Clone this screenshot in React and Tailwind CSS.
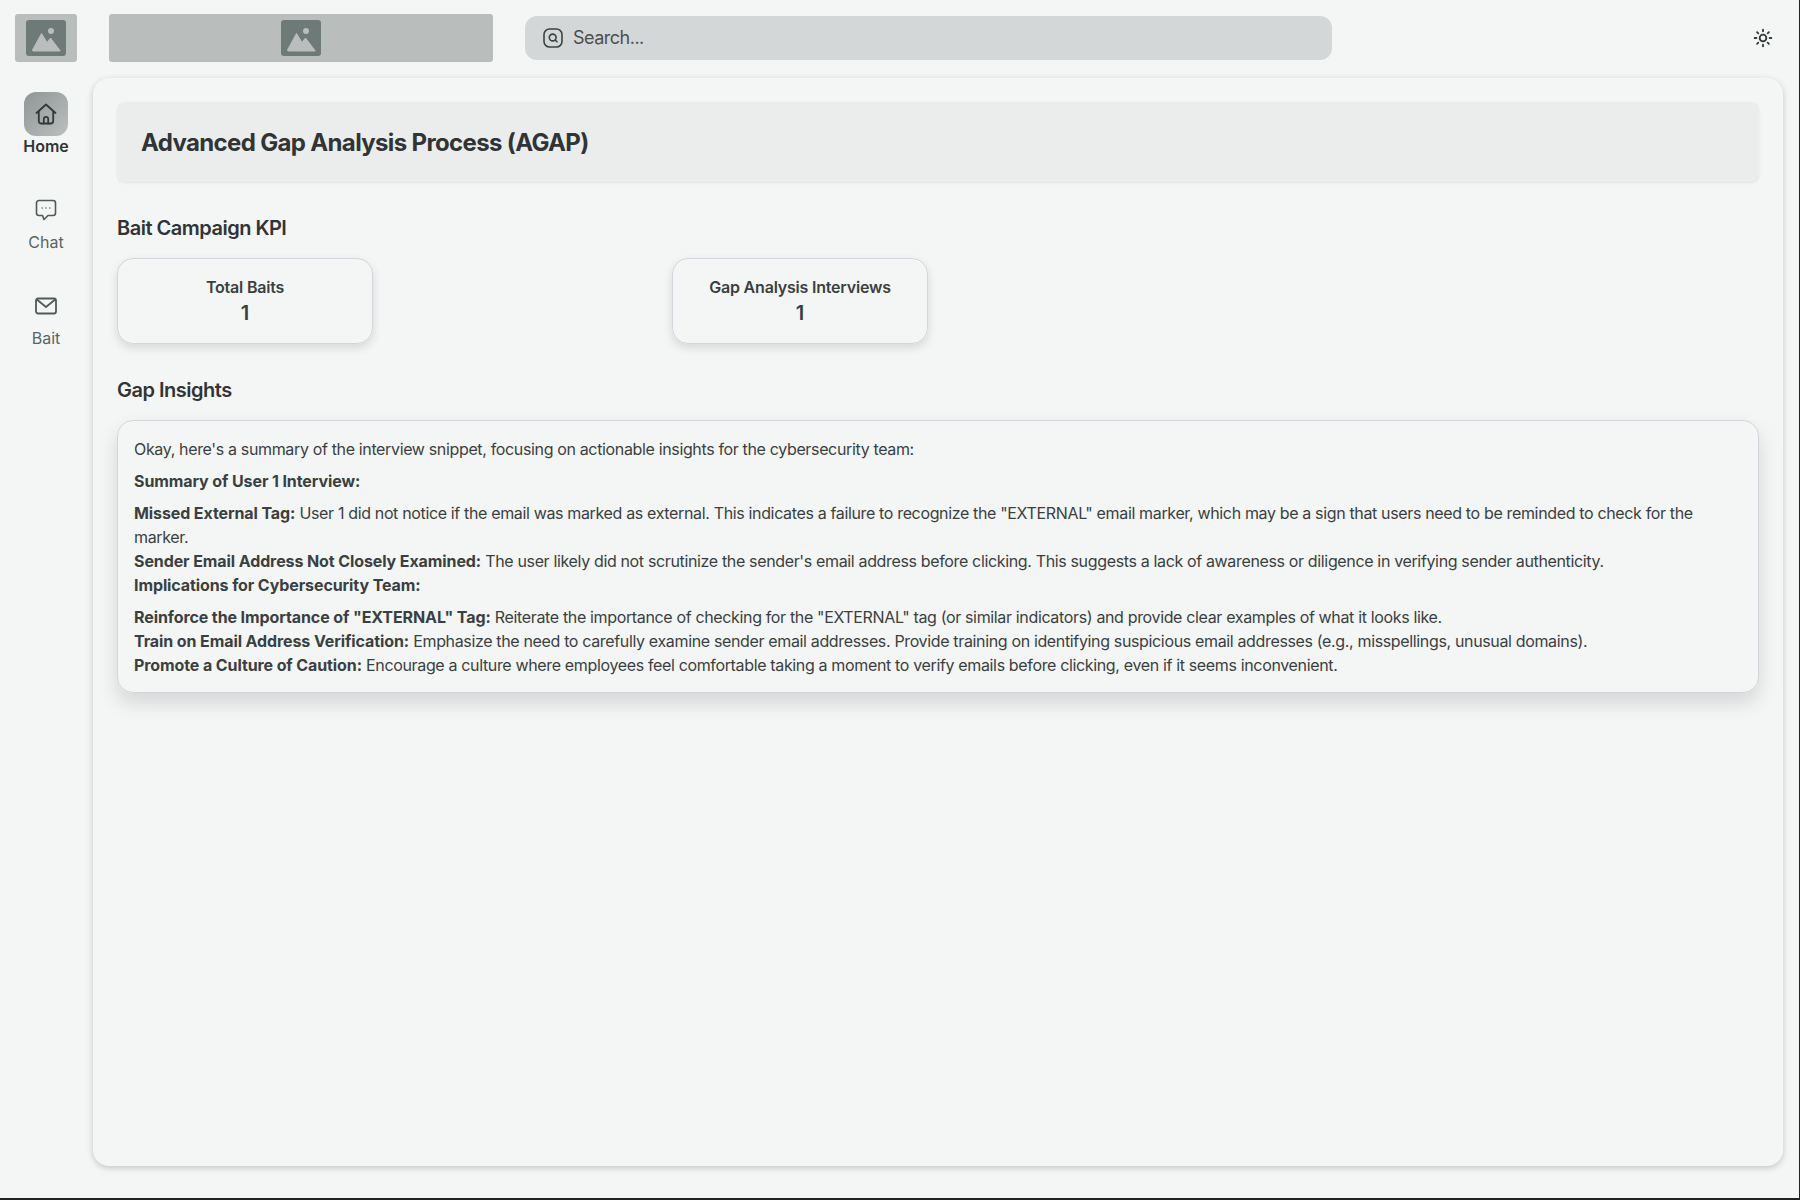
import React from "react";
import { Sun } from "lucide-react";

const ImageIcon = () => (
	<svg width="40" height="36" viewBox="0 0 40 36">
		<rect width="40" height="36" rx="3" fill="#6e7a78" />
		<circle cx="25" cy="11" r="3" fill="#b9bdbc" />
		<path
			d="M6.5 30 15.5 13.5 21 22.5 24.5 18 34 30.500a.5.5 0 0 1 0 .5H7z"
			fill="#b9bdbc"
			stroke="#b9bdbc"
			strokeLinejoin="round"
		/>
	</svg>
);

const HomeIcon = () => (
	<svg width="22" height="22" viewBox="0 0 22 22" fill="none" stroke="#33393a" strokeWidth="1.8" strokeLinejoin="round" strokeLinecap="round">
		<path d="M1.500 10 11 1.500 20.500 10" />
		<path d="M3.800 8.500V18a2.500 2.500 0 0 0 2.500 2.500h9.400a2.500 2.500 0 0 0 2.500-2.500V8.500" />
		<path d="M8.800 20.500v-4.500a2.200 2.200 0 0 1 4.400 0v4.500" />
	</svg>
);

const ChatIcon = () => (
	<svg width="22" height="22" viewBox="0 0 22 22" fill="none" stroke="#4f5a59" strokeWidth="1.600" strokeLinejoin="round">
		<path d="M4 1.500h14A2.500 2.500 0 0 1 20.500 4v10a2.500 2.500 0 0 1-2.500 2.500h-5L9 20.500 7.500 16.500H4A2.500 2.500 0 0 1 1.500 14V4A2.500 2.500 0 0 1 4 1.500z" />
		<path d="M6.600 9h1.200M10.400 9h1.200M14.200 9h1.200" strokeWidth="1.400" stroke="#6a7473" />
	</svg>
);

const MailIcon = () => (
	<svg width="22" height="18" viewBox="0 0 22 18" fill="none" stroke="#4f5a59" strokeWidth="1.800" strokeLinejoin="round" strokeLinecap="round">
		<rect x="1" y="1.500" width="20" height="15" rx="2" />
		<path d="M1.800 2.500 11 10l9.200-7.500" />
	</svg>
);

const SearchIcon = () => (
	<svg width="20" height="20" viewBox="0 0 20 20" fill="none" stroke="#3d4344" strokeWidth="1.600" strokeLinecap="round">
		<rect x="1" y="1" width="18" height="18" rx="5.500" />
		<circle cx="9.700" cy="9.500" r="3.400" />
		<path d="m12.200 12 1.800 1.800" />
	</svg>
);

const navItems = [
	{ label: "Home", icon: <HomeIcon />, active: true },
	{ label: "Chat", icon: <ChatIcon /> },
	{ label: "Bait", icon: <MailIcon /> },
];

const Kpi = ({ title, value }) => (
	<div className="w-[256px] h-[86px] flex flex-col items-center justify-center rounded-2xl border border-[#d3d4dc] shadow-[0_4px_10px_rgba(0,0,0,0.12)]">
		<div className="text-base font-semibold leading-6 tracking-[-0.2px] text-[#3a3f41]">{title}</div>
		<div className="text-xl font-semibold leading-7 text-[#3a3f41]">{value}</div>
	</div>
);

const Lead = ({ children }) => <b className="font-bold tracking-[-0.1px]">{children}</b>;

export default function App() {
	return (
		<div className="min-h-screen bg-[#222222] font-['Inter',sans-serif]">
			<div className="w-[1799px] h-[1198px] bg-[#f4f6f5] text-[#303436]">
				{/* top bar */}
				<header className="h-[76px] mb-[2px] flex items-center">
					<div className="ml-[15px] w-[62px] h-[48px] rounded-[3px] bg-[#b9bdbc] flex items-center justify-center">
						<ImageIcon />
					</div>
					<div className="ml-[32px] w-[384px] h-[48px] rounded-[3px] bg-[#b9bdbc] flex items-center justify-center">
						<ImageIcon />
					</div>
					<div className="ml-[32px] w-[807px] h-[44px] rounded-xl bg-[#d4d7d7] flex items-center px-[18px] gap-[10px]">
						<SearchIcon />
						<span className="text-lg tracking-[-0.5px] text-[#4a4f50]">Search...</span>
					</div>
					<div className="ml-[421px]">
						<Sun size={20} strokeWidth={2.2} className="text-[#33393a]" />
					</div>
				</header>

				<div className="flex">
					{/* sidebar */}
					<nav className="w-[93px] pt-[14px] pl-[16px] flex flex-col gap-[28px]">
						{navItems.map((item) => (
							<div key={item.label} className="w-[60px] h-[68px] flex flex-col items-center">
								<div
									className={
										item.active
											? "w-[44px] h-[44px] rounded-xl flex items-center justify-center bg-gradient-to-br from-[#8f9695] to-[#bcc0bf]"
											: "w-[44px] h-[44px] flex items-center justify-center"
									}
								>
									{item.icon}
								</div>
								<span className={item.active ? "-mt-[2px] text-base leading-6 font-semibold text-[#303436]" : "-mt-[2px] text-base leading-6 text-[#5a6462]"}>
									{item.label}
								</span>
							</div>
						))}
					</nav>

					{/* main panel */}
					<main className="w-[1690px] h-[1088px] rounded-2xl px-[24px] pt-[24px] shadow-[0_2px_6px_rgba(0,0,0,0.2)]">
						<div className="h-[80px] flex items-center px-[24px] rounded-lg bg-[#ebedec] shadow-[0_1px_3px_rgba(0,0,0,0.08)]">
							<h1 className="pt-[2px] text-2xl font-bold tracking-[-0.65px]">Advanced Gap Analysis Process (AGAP)</h1>
						</div>

						<h2 className="mt-[32px] text-xl leading-7 font-semibold tracking-[-0.5px]">Bait Campaign KPI</h2>
						<div className="mt-[16px] flex gap-[299px]">
							<Kpi title="Total Baits" value="1" />
							<Kpi title="Gap Analysis Interviews" value="1" />
						</div>

						<h2 className="mt-[32px] text-xl leading-7 font-semibold tracking-[-0.5px]">Gap Insights</h2>
						<section className="mt-[16px] w-[1642px] rounded-2xl border border-[#d3d4dc] px-[16px] pt-[16px] pb-[15px] text-base leading-6 tracking-[-0.35px] text-[#3a3f41] shadow-[0_10px_20px_rgba(0,0,0,0.13)]">
							<p className="mb-[8px]">Okay, here's a summary of the interview snippet, focusing on actionable insights for the cybersecurity team:</p>
							<p className="mb-[8px]">
								<Lead>Summary of User 1 Interview:</Lead>
							</p>
							<p>
								<Lead>Missed External Tag:</Lead> User 1 did not notice if the email was marked as external. This indicates a failure to recognize the "EXTERNAL" email marker, which may be a sign that users need to be reminded to check for the marker.
							</p>
							<p>
								<Lead>Sender Email Address Not Closely Examined:</Lead> The user likely did not scrutinize the sender's email address before clicking. This suggests a lack of awareness or diligence in verifying sender authenticity.
							</p>
							<p className="mb-[8px]">
								<Lead>Implications for Cybersecurity Team:</Lead>
							</p>
							<p>
								<Lead>Reinforce the Importance of "EXTERNAL" Tag:</Lead> Reiterate the importance of checking for the "EXTERNAL" tag (or similar indicators) and provide clear examples of what it looks like.
							</p>
							<p>
								<Lead>Train on Email Address Verification:</Lead> Emphasize the need to carefully examine sender email addresses. Provide training on identifying suspicious email addresses (e.g., misspellings, unusual domains).
							</p>
							<p>
								<Lead>Promote a Culture of Caution:</Lead> Encourage a culture where employees feel comfortable taking a moment to verify emails before clicking, even if it seems inconvenient.
							</p>
						</section>
					</main>
				</div>
			</div>
		</div>
	);
}
